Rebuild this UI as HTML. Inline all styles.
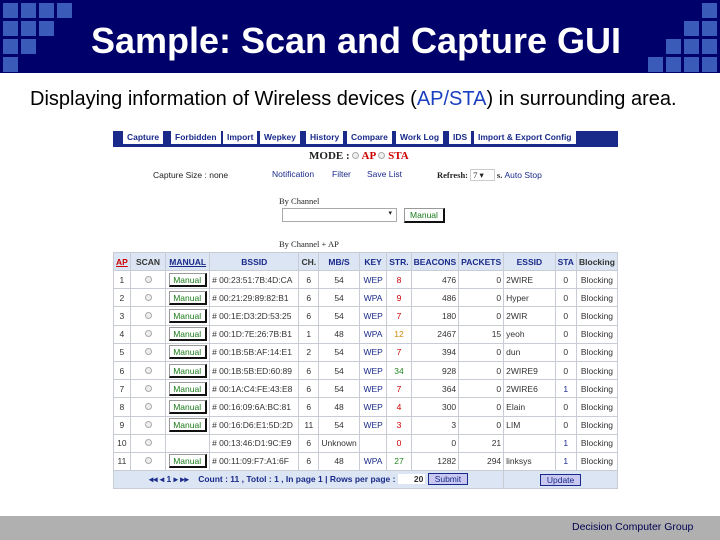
<!DOCTYPE html>
<html><head><meta charset="utf-8"><style>
*{margin:0;padding:0;box-sizing:border-box}
body{width:720px;height:540px;background:#fff;position:relative;overflow:hidden;font-family:"Liberation Sans",sans-serif}
.hdr{position:absolute;left:0;top:0;width:720px;height:73px;background:#00006a}
.sq{position:absolute;width:15px;height:15px;background:#3a5cb8}
.title{position:absolute;left:0;width:712px;top:21px;text-align:center;color:#fff;font-weight:bold;font-size:36px;line-height:40px}
.sub{position:absolute;left:30px;top:88px;font-size:20px;color:#000}
.sub b{font-weight:normal;color:#1a3fc0}
.shot{position:absolute;left:113px;top:128px;width:505px;height:360px;background:#fff;font-size:8.5px;color:#222}
.tabs{position:absolute;left:0;top:3px;width:505px;height:16px;background:#1a2a8a;border-bottom:3px solid #1a2a8a}
.tab{position:absolute;top:3px;height:13px;background:#fff;color:#1a2a8a;font-weight:bold;font-size:8.5px;line-height:13px;padding:0 4px}
.a{position:absolute;white-space:nowrap}
table{position:absolute;left:0;top:124px;border-collapse:collapse;font-size:8.5px}
td{border:1px solid #c8ccd4;height:18.2px;padding:0 2px;text-align:center;color:#333}
tr.h td{background:#dbe5f3;font-weight:bold;color:#1a2a8a;height:18px}
.btn{display:inline-block;border:1px solid #999;border-right:2px solid #111;border-bottom:2px solid #111;color:#1a7a1a;width:38px;height:14px;line-height:12px}
.r{text-align:right}.l{text-align:left}
.rad{display:inline-block;width:7px;height:7px;border-radius:50%;border:1px solid #aaa;background:#eee}
.foot{position:absolute;left:0;top:516px;width:720px;height:24px;background:#b0b0b0}
</style></head><body>
<div class="hdr"></div>
<div class="sq" style="left:3px;top:3px"></div><div class="sq" style="left:21px;top:3px"></div><div class="sq" style="left:39px;top:3px"></div><div class="sq" style="left:57px;top:3px"></div>
<div class="sq" style="left:3px;top:21px"></div><div class="sq" style="left:21px;top:21px"></div><div class="sq" style="left:39px;top:21px"></div>
<div class="sq" style="left:3px;top:39px"></div><div class="sq" style="left:21px;top:39px"></div>
<div class="sq" style="left:3px;top:57px"></div>
<div class="sq" style="left:702px;top:3px"></div>
<div class="sq" style="left:684px;top:21px"></div><div class="sq" style="left:702px;top:21px"></div>
<div class="sq" style="left:666px;top:39px"></div><div class="sq" style="left:684px;top:39px"></div><div class="sq" style="left:702px;top:39px"></div>
<div class="sq" style="left:648px;top:57px"></div><div class="sq" style="left:666px;top:57px"></div><div class="sq" style="left:684px;top:57px"></div><div class="sq" style="left:702px;top:57px"></div>
<div class="title">Sample: Scan and Capture GUI</div>
<div class="sub">Displaying information of Wireless devices (<b>AP/STA</b>) in surrounding area.</div>
<div class="shot">
<div class="tabs"></div>
<div class="tab" style="left:10px">Capture</div>
<div class="tab" style="left:58px">Forbidden</div>
<div class="tab" style="left:110px">Import</div>
<div class="tab" style="left:147px">Wepkey</div>
<div class="tab" style="left:193px">History</div>
<div class="tab" style="left:234px">Compare</div>
<div class="tab" style="left:283px">Work Log</div>
<div class="tab" style="left:336px">IDS</div>
<div class="tab" style="left:361px">Import &amp; Export Config</div>
<div class="a" style="left:196px;top:22px;font-family:'Liberation Serif',serif;font-weight:bold;font-size:11px">MODE : <span class="rad"></span> <span style="color:#c00">AP</span> <span class="rad"></span> <span style="color:#c00">STA</span></div>
<div class="a" style="left:40px;top:42px">Capture Size : none</div>
<div class="a" style="left:159px;top:41px;color:#1a2a8a">Notification</div>
<div class="a" style="left:219px;top:41px;color:#1a2a8a">Filter</div>
<div class="a" style="left:254px;top:41px;color:#1a2a8a">Save List</div>
<div class="a" style="left:324px;top:42px;font-family:'Liberation Serif',serif;font-weight:bold">Refresh: <span style="border:1px solid #ccc;padding:0 10px 0 2px;font-weight:normal">7 ▾</span> s. <span style="color:#1a2a8a;font-family:'Liberation Sans';font-weight:normal">Auto Stop</span></div>
<div class="a" style="left:166px;top:68px;font-family:'Liberation Serif',serif">By Channel</div>
<div class="a" style="left:169px;top:80px;width:115px;height:14px;border:1px solid #aaa;text-align:right;padding-right:4px;font-size:7px">▾</div>
<div class="a" style="left:291px;top:80px;width:41px;height:15px;border:1px solid #999;border-right:2px solid #111;border-bottom:2px solid #111;color:#1a7a1a;text-align:center;line-height:12px">Manual</div>
<div class="a" style="left:166px;top:111px;font-family:'Liberation Serif',serif">By Channel + AP</div>
<table>
<colgroup><col style="width:10px"><col style="width:37px"><col style="width:44px"><col style="width:92px"><col style="width:19px"><col style="width:41px"><col style="width:28px"><col style="width:23px"><col style="width:47px"><col style="width:45px"><col style="width:55px"><col style="width:21px"><col style="width:41px"></colgroup>
<tr class="h"><td style="color:#c00;text-decoration:underline">AP</td><td style="color:#333">SCAN</td><td style="text-decoration:underline">MANUAL</td><td>BSSID</td><td style="color:#333">CH.</td><td>MB/S</td><td>KEY</td><td>STR.</td><td>BEACONS</td><td>PACKETS</td><td>ESSID</td><td>STA</td><td style="color:#333">Blocking</td></tr>
<tr><td>1</td><td><span class="rad"></span></td><td><span class="btn">Manual</span></td><td class="l"># 00:23:51:7B:4D:CA</td><td>6</td><td>54</td><td style="color:#1a2a8a">WEP</td><td style="color:#c00">8</td><td class="r">476</td><td class="r">0</td><td class="l">2WIRE</td><td>0</td><td>Blocking</td></tr>
<tr><td>2</td><td><span class="rad"></span></td><td><span class="btn">Manual</span></td><td class="l"># 00:21:29:89:82:B1</td><td>6</td><td>54</td><td style="color:#1a2a8a">WPA</td><td style="color:#c00">9</td><td class="r">486</td><td class="r">0</td><td class="l">Hyper</td><td>0</td><td>Blocking</td></tr>
<tr><td>3</td><td><span class="rad"></span></td><td><span class="btn">Manual</span></td><td class="l"># 00:1E:D3:2D:53:25</td><td>6</td><td>54</td><td style="color:#1a2a8a">WEP</td><td style="color:#c00">7</td><td class="r">180</td><td class="r">0</td><td class="l">2WIR</td><td>0</td><td>Blocking</td></tr>
<tr><td>4</td><td><span class="rad"></span></td><td><span class="btn">Manual</span></td><td class="l"># 00:1D:7E:26:7B:B1</td><td>1</td><td>48</td><td style="color:#1a2a8a">WPA</td><td style="color:#c80">12</td><td class="r">2467</td><td class="r">15</td><td class="l">yeoh</td><td>0</td><td>Blocking</td></tr>
<tr><td>5</td><td><span class="rad"></span></td><td><span class="btn">Manual</span></td><td class="l"># 00:1B:5B:AF:14:E1</td><td>2</td><td>54</td><td style="color:#1a2a8a">WEP</td><td style="color:#c00">7</td><td class="r">394</td><td class="r">0</td><td class="l">dun</td><td>0</td><td>Blocking</td></tr>
<tr><td>6</td><td><span class="rad"></span></td><td><span class="btn">Manual</span></td><td class="l"># 00:1B:5B:ED:60:89</td><td>6</td><td>54</td><td style="color:#1a2a8a">WEP</td><td style="color:#282">34</td><td class="r">928</td><td class="r">0</td><td class="l">2WIRE9</td><td>0</td><td>Blocking</td></tr>
<tr><td>7</td><td><span class="rad"></span></td><td><span class="btn">Manual</span></td><td class="l"># 00:1A:C4:FE:43:E8</td><td>6</td><td>54</td><td style="color:#1a2a8a">WEP</td><td style="color:#c00">7</td><td class="r">364</td><td class="r">0</td><td class="l">2WIRE6</td><td style="color:#1a2a8a">1</td><td>Blocking</td></tr>
<tr><td>8</td><td><span class="rad"></span></td><td><span class="btn">Manual</span></td><td class="l"># 00:16:09:6A:BC:81</td><td>6</td><td>48</td><td style="color:#1a2a8a">WEP</td><td style="color:#c00">4</td><td class="r">300</td><td class="r">0</td><td class="l">Elain</td><td>0</td><td>Blocking</td></tr>
<tr><td>9</td><td><span class="rad"></span></td><td><span class="btn">Manual</span></td><td class="l"># 00:16:D6:E1:5D:2D</td><td>11</td><td>54</td><td style="color:#1a2a8a">WEP</td><td style="color:#c00">3</td><td class="r">3</td><td class="r">0</td><td class="l">LIM</td><td>0</td><td>Blocking</td></tr>
<tr><td>10</td><td><span class="rad"></span></td><td></td><td class="l"># 00:13:46:D1:9C:E9</td><td>6</td><td>Unknown</td><td></td><td style="color:#c00">0</td><td class="r">0</td><td class="r">21</td><td class="l"></td><td style="color:#1a2a8a">1</td><td>Blocking</td></tr>
<tr><td>11</td><td><span class="rad"></span></td><td><span class="btn">Manual</span></td><td class="l"># 00:11:09:F7:A1:6F</td><td>6</td><td>48</td><td style="color:#1a2a8a">WPA</td><td style="color:#282">27</td><td class="r">1282</td><td class="r">294</td><td class="l">linksys</td><td style="color:#1a2a8a">1</td><td>Blocking</td></tr>
<tr><td colspan="10" style="background:#dbe5f3;color:#1a2a8a;font-weight:bold;height:17px">◂◂ ◂ 1 ▸ ▸▸ &nbsp;&nbsp; Count : 11 , Totol : 1 , In page 1 | Rows per page : <span style="background:#fff;padding:0 2px 0 16px;color:#333">20</span> <span style="border:1px solid #1a2a8a;background:#c8c8f0;padding:0 6px;font-weight:normal">Submit</span></td><td colspan="3" style="background:#dbe5f3"><span style="border:1px solid #1a2a8a;background:#c8c8f0;padding:0 6px;color:#1a2a8a">Update</span></td></tr>
</table>
</div>
<div class="foot"></div>
<div class="a" style="position:absolute;left:572px;top:521px;font-size:10.5px;color:#000050">Decision Computer Group</div>
</body></html>
